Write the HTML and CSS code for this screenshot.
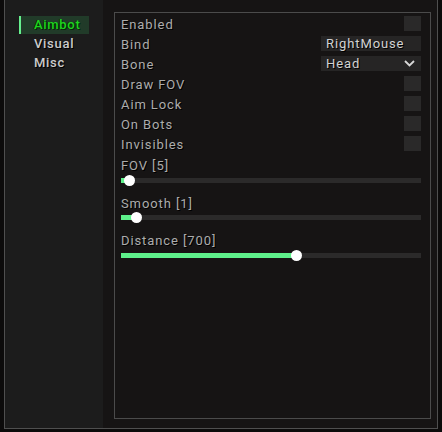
FILE: index.html
```html
<!DOCTYPE html>
<html>
<head>
<meta charset="utf-8">
<link rel="stylesheet" href="styles.css">
</head>
<body>
<div class="window">
  <div class="sidebar">
    <div class="tab active">Aimbot</div>
    <div class="tab">Visual</div>
    <div class="tab">Misc</div>
  </div>
  <div class="main">
    <div class="panel">
      <div class="row"><span class="label">Enabled</span><span class="check"></span></div>
      <div class="row"><span class="label">Bind</span><span class="field">RightMouse</span></div>
      <div class="row"><span class="label">Bone</span><span class="field select">Head<svg class="chev" width="11" height="7" viewBox="0 0 11 7"><path d="M1 1 L5.5 5.5 L10 1" fill="none" stroke="#d8d8d8" stroke-width="1.8"/></svg></span></div>
      <div class="row"><span class="label">Draw FOV</span><span class="check"></span></div>
      <div class="row"><span class="label">Aim Lock</span><span class="check"></span></div>
      <div class="row"><span class="label">On Bots</span><span class="check"></span></div>
      <div class="row"><span class="label">Invisibles</span><span class="check"></span></div>
      <div class="sliders">
        <div class="slider">
          <div class="label">FOV [5]</div>
          <div class="track-wrap"><div class="track"><div class="fill" style="width:8px"></div><span class="thumb" style="left:3px"></span></div></div>
        </div>
        <div class="slider">
          <div class="label">Smooth [1]</div>
          <div class="track-wrap"><div class="track"><div class="fill" style="width:15px"></div><span class="thumb" style="left:10px"></span></div></div>
        </div>
        <div class="slider">
          <div class="label">Distance [700]</div>
          <div class="track-wrap"><div class="track"><div class="fill" style="width:175px"></div><span class="thumb" style="left:170px"></span></div></div>
        </div>
      </div>
    </div>
  </div>
</div>
</body>
</html>
```
FILE: styles.css
```css
html, body {
  margin: 0;
  padding: 0;
  background: #0c0b0b;
  overflow: hidden;
}
body {
  width: 442px;
  height: 432px;
  font-family: Roboto, "Liberation Sans", sans-serif;
  font-size: 13px;
  font-weight: 400;
  letter-spacing: 0.9px;
}
.window {
  box-sizing: border-box;
  margin: -1px 0 0 4px;
  width: 434px;
  height: 430px;
  border: 1px solid #4f4f4f;
  display: flex;
  background: #161414;
}
.sidebar {
  width: 98px;
  flex: none;
  background: #1c1c1c;
  padding: 16px 0 0 14px;
  box-sizing: border-box;
}
.tab {
  width: 70px;
  height: 18px;
  line-height: 18px;
  padding-left: 15px;
  box-sizing: border-box;
  margin-bottom: 1px;
  color: #cbcbcb;
  font-weight: 500;
  letter-spacing: 0.7px;
  text-shadow: 1px 1px 0 #000;
}
.tab.active {
  background: #213b29;
  border-left: 2px solid #66f08e;
  padding-left: 13px;
  color: #1fd41f;
  text-shadow: 1px 1px 0 #052a05, -1px 0 0 #0a2a0a;
}
.main {
  flex: 1;
  display: flex;
  padding: 12px 6px 9px 11px;
}
.panel {
  flex: 1;
  border: 1px solid #4b4b4b;
  padding: 1px 9px 0 6px;
}
.row {
  height: 20px;
  display: flex;
  align-items: center;
  justify-content: space-between;
}
.label {
  color: #acacac;
  text-shadow: 1px 1px 0 #000;
}
.check {
  width: 17px;
  height: 15px;
  background: #2a2929;
  margin-top: -1px;
}
.field {
  width: 100px;
  height: 15px;
  line-height: 15px;
  box-sizing: border-box;
  padding-left: 5px;
  background: #262525;
  color: #d2d2d2;
  text-shadow: 1px 1px 0 #000;
  display: flex;
  align-items: center;
  justify-content: space-between;
  margin-top: -1px;
}
.select {
  padding-right: 6px;
}
.chev {
  display: block;
}
.sliders {
  margin-top: 3px;
  display: flex;
  flex-direction: column;
  gap: 9.5px;
}
.slider .label {
  line-height: 18px;
}
.track-wrap {
  height: 10px;
  display: flex;
  align-items: center;
}
.track {
  position: relative;
  flex: 1;
  height: 5px;
  background: #2b2a2a;
}
.fill {
  height: 100%;
  background: #5ef08b;
}
.thumb {
  position: absolute;
  top: -3px;
  width: 11px;
  height: 11px;
  border-radius: 50%;
  background: #ffffff;
}
```
